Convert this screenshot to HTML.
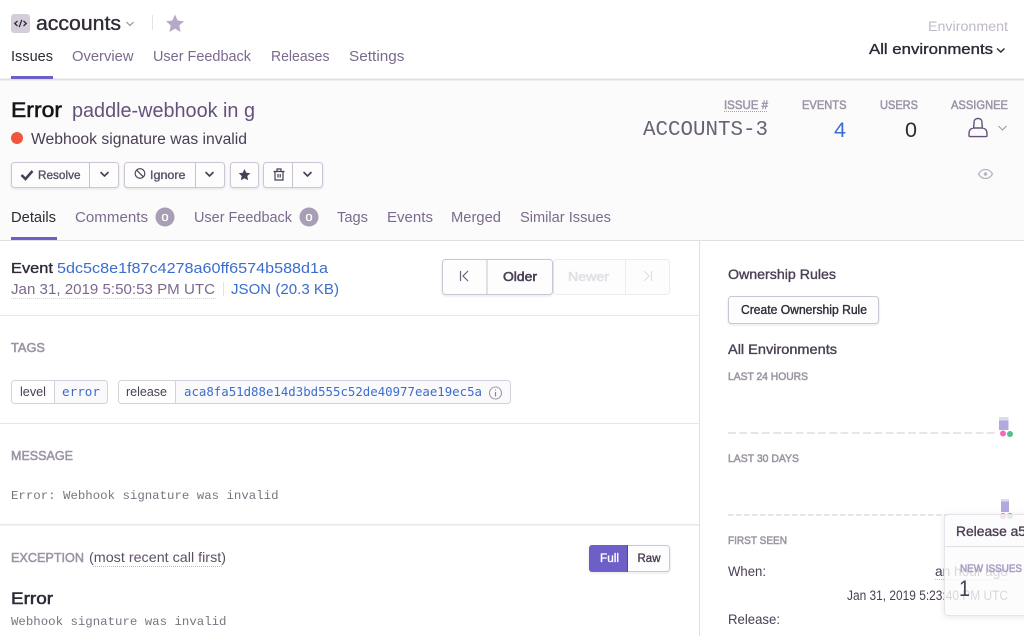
<!DOCTYPE html>
<html><head><meta charset="utf-8"><title>accounts</title>
<style>
html,body{margin:0;padding:0;background:#fff;width:1024px;height:636px;overflow:hidden}
svg{display:block;position:absolute;left:0;top:0;filter:blur(.3px)}
text{font-family:"Liberation Sans",sans-serif;white-space:pre}
.m{stroke-width:.35;paint-order:stroke}
.h{stroke-width:.55;paint-order:stroke}
.mono{font-family:"Liberation Mono",monospace}
.dj{font-family:"DejaVu Sans Mono",monospace}
.lab{font-size:12px;fill:#9d93a6;stroke:#9d93a6;stroke-width:.5}
.nav{font-size:14.5px;fill:#7c6a8e}
.lnk{fill:#3b6ecc;font-size:15px}
.ic{fill:none;stroke:#493e54;stroke-width:1.6;stroke-linecap:round;stroke-linejoin:round}
.btn{fill:#fdfdfe;stroke:#cdc5d5;stroke-width:1}
</style></head><body>
<svg width="1024" height="636" viewBox="0 0 1024 636" xmlns="http://www.w3.org/2000/svg">
<defs>
<filter id="sh" x="-20%" y="-20%" width="140%" height="140%"><feDropShadow dx="0" dy="1" stdDeviation="1" flood-color="#3b3050" flood-opacity=".12"/></filter>
<filter id="sh2" x="-20%" y="-20%" width="140%" height="140%"><feDropShadow dx="0" dy="1" stdDeviation="3" flood-color="#3b3050" flood-opacity=".14"/></filter>
</defs>
<rect width="1024" height="636" fill="#fff"/>
<rect x="0" y="80" width="1024" height="160" fill="#fbfbfc"/>
<rect x="0" y="78.500" width="1024" height="2" fill="#e2dee6"/>
<rect x="11" y="76" width="42" height="3" fill="#6c5fc7"/>

<!-- project header -->
<rect x="11" y="14" width="19" height="19" rx="3" fill="#d3ced9"/>
<path d="M17.500 21 L14.800 23.500 L17.500 26 M23.500 21 L26.200 23.500 L23.500 26 M21.800 19.800 L19.200 27.200" fill="none" stroke="#2f2936" stroke-width="1.300"/>
<text x="36" y="30" font-size="20" fill="#2f2936" stroke="#2f2936" class="m" textLength="85" lengthAdjust="spacingAndGlyphs">accounts</text>
<path d="M126.500 22 L130 25.500 L133.500 22" fill="none" stroke="#8f8599" stroke-width="1"/>
<rect x="152" y="15" width="1" height="15" fill="#e5e2e8"/>
<path d="M175 14.500 L177.700 20.500 L184 21.200 L179.300 25.400 L180.600 32 L175 28.700 L169.400 32 L170.700 25.400 L166 21.200 L172.300 20.500 Z" fill="#b5a9c7"/>

<text x="11" y="61" font-size="14.500" fill="#2f2936" textLength="42" lengthAdjust="spacingAndGlyphs">Issues</text>
<text x="72" y="61" class="nav" textLength="61.500" lengthAdjust="spacingAndGlyphs">Overview</text>
<text x="153" y="61" class="nav" textLength="98" lengthAdjust="spacingAndGlyphs">User Feedback</text>
<text x="271" y="61" class="nav" textLength="58.500" lengthAdjust="spacingAndGlyphs">Releases</text>
<text x="349" y="61" class="nav" textLength="55.500" lengthAdjust="spacingAndGlyphs">Settings</text>

<text x="928" y="31" font-size="14" fill="#c0b8c9" textLength="80" lengthAdjust="spacingAndGlyphs">Environment</text>
<text x="869" y="54" font-size="15" fill="#2f2936" stroke="#2f2936" class="m" textLength="124" lengthAdjust="spacingAndGlyphs">All environments</text>
<path d="M997 48.500 L1000.800 52 L1004.500 48.500" fill="none" stroke="#2f2936" stroke-width="1.400"/>

<!-- issue title -->
<text x="11" y="117" font-size="21" fill="#161319" stroke="#161319" class="h" textLength="51" lengthAdjust="spacingAndGlyphs">Error</text>
<text x="72" y="117" font-size="20" fill="#64527a" textLength="183" lengthAdjust="spacingAndGlyphs">paddle-webhook in g</text>
<circle cx="17" cy="138" r="6" fill="#f0563c"/>
<text x="31" y="144" font-size="15.500" fill="#493e54" textLength="216" lengthAdjust="spacingAndGlyphs">Webhook signature was invalid</text>

<!-- action buttons -->
<g filter="url(#sh)">
<rect class="btn" x="11.500" y="162.500" width="107" height="25" rx="3"/>
<rect class="btn" x="124.500" y="162.500" width="100" height="25" rx="3"/>
<rect class="btn" x="230.500" y="162.500" width="28" height="25" rx="3"/>
<rect class="btn" x="263.500" y="162.500" width="59" height="25" rx="3"/>
</g>
<rect x="89" y="162" width="1" height="26" fill="#c9c0d1"/>
<rect x="195" y="162" width="1" height="26" fill="#c9c0d1"/>
<rect x="292" y="162" width="1" height="26" fill="#c9c0d1"/>
<path d="M21.500 175 L25.500 179 L32.500 171" fill="none" stroke="#493e54" stroke-width="2.600"/>
<text x="38" y="179" font-size="12" fill="#5a4f66" stroke="#5a4f66" class="m" textLength="42.500" lengthAdjust="spacingAndGlyphs">Resolve</text>
<path d="M101 172.500 L104.500 176 L108 172.500" class="ic"/>
<circle cx="140" cy="173.500" r="4.800" fill="none" stroke="#493e54" stroke-width="1.100"/>
<path d="M136.700 170.200 L143.300 176.800" stroke="#493e54" stroke-width="1.100"/>
<text x="150" y="179" font-size="12" fill="#5a4f66" stroke="#5a4f66" class="m" textLength="35.500" lengthAdjust="spacingAndGlyphs">Ignore</text>
<path d="M206 172.500 L209.500 176 L213 172.500" class="ic"/>
<path d="M244.500 169 L246.300 172.800 L250.300 173.300 L247.300 176 L248.100 180.200 L244.500 178.200 L240.900 180.200 L241.700 176 L238.700 173.300 L242.700 172.800 Z" fill="#493e54"/>
<path d="M273.500 171.500 H284.500 M275 171.500 V180 H283 V171.500 M277 171.500 V169 H281 V171.500 M278 174 V177.500 M280.200 174 V177.500" fill="none" stroke="#493e54" stroke-width="1.200"/>
<path d="M304 172.500 L307.500 176 L311 172.500" class="ic"/>

<!-- stats -->
<text x="724" y="109" class="lab" textLength="44" lengthAdjust="spacingAndGlyphs">ISSUE #</text>
<path d="M724 111.500 H768" stroke="#a89eb5" stroke-width="1" stroke-dasharray="1 1"/>
<text x="802" y="109" class="lab" textLength="44.500" lengthAdjust="spacingAndGlyphs">EVENTS</text>
<text x="880" y="109" class="lab" textLength="38" lengthAdjust="spacingAndGlyphs">USERS</text>
<text x="951" y="109" class="lab" textLength="57" lengthAdjust="spacingAndGlyphs">ASSIGNEE</text>
<text x="643" y="135" class="mono" font-size="20.800" fill="#6a6072" textLength="125" lengthAdjust="spacingAndGlyphs">ACCOUNTS-3</text>
<text x="834" y="137" font-size="21" fill="#3b6ecc" textLength="12" lengthAdjust="spacingAndGlyphs">4</text>
<text x="905" y="137" font-size="21" fill="#2f2936" textLength="12" lengthAdjust="spacingAndGlyphs">0</text>
<path d="M973.500 128 C973.500 126.500 974 125.800 974 124 V122 C974 119.800 975.800 118.500 978 118.500 C980.200 118.500 982 119.800 982 122 V124 C982 125.800 982.500 126.500 982.500 128 M969 134 C969 129.500 971 128.500 973.500 128 H982.500 C985 128.500 987 129.500 987 134 V135.500 C987 136.300 986.500 136.600 986 136.600 H970 C969.500 136.600 969 136.300 969 135.500 Z" fill="none" stroke="#64527a" stroke-width="1.400"/>
<path d="M998.500 126 L1002.500 130 L1006.500 126" fill="none" stroke="#9d93a6" stroke-width="1"/>
<path d="M978.500 174 C980.500 170.500 983 169.500 985.500 169.500 C988 169.500 990.500 170.500 992.500 174 C990.500 177.500 988 178.500 985.500 178.500 C983 178.500 980.500 177.500 978.500 174 Z" fill="none" stroke="#b9b3c0" stroke-width="1.300"/>
<circle cx="985.500" cy="174" r="1.800" fill="#b9b3c0"/>

<!-- subtabs -->
<text x="11" y="222" font-size="14.500" fill="#2f2936" textLength="45" lengthAdjust="spacingAndGlyphs">Details</text>
<text x="75" y="222" class="nav" textLength="73" lengthAdjust="spacingAndGlyphs">Comments</text>
<circle cx="165" cy="217" r="9.500" fill="#a89eb5"/>
<text x="161.500" y="221" font-size="10.500" fill="#fff" stroke="#fff" class="m" textLength="7" lengthAdjust="spacingAndGlyphs">0</text>
<text x="194" y="222" class="nav" textLength="98" lengthAdjust="spacingAndGlyphs">User Feedback</text>
<circle cx="309" cy="217" r="9.500" fill="#a89eb5"/>
<text x="305.500" y="221" font-size="10.500" fill="#fff" stroke="#fff" class="m" textLength="7" lengthAdjust="spacingAndGlyphs">0</text>
<text x="337" y="222" class="nav" textLength="31" lengthAdjust="spacingAndGlyphs">Tags</text>
<text x="387" y="222" class="nav" textLength="46" lengthAdjust="spacingAndGlyphs">Events</text>
<text x="451" y="222" class="nav" textLength="50" lengthAdjust="spacingAndGlyphs">Merged</text>
<text x="520" y="222" class="nav" textLength="91" lengthAdjust="spacingAndGlyphs">Similar Issues</text>
<rect x="0" y="240" width="1024" height="1" fill="#e2dee6"/>
<rect x="11" y="237" width="46" height="3" fill="#6c5fc7"/>
<rect x="699" y="240" width="1" height="396" fill="#e2dee6"/>

<!-- event row -->
<text x="11" y="273" font-size="15" fill="#2f2936" stroke="#2f2936" class="m" textLength="42" lengthAdjust="spacingAndGlyphs">Event</text>
<text x="57" y="273" class="lnk" textLength="271" lengthAdjust="spacingAndGlyphs">5dc5c8e1f87c4278a60ff6574b588d1a</text>
<text x="11" y="294" font-size="15" fill="#7c6a8e" textLength="204" lengthAdjust="spacingAndGlyphs">Jan 31, 2019 5:50:53 PM UTC</text>
<path d="M11 298.500 H216" stroke="#d8d3dd" stroke-width="1" stroke-dasharray="1 1"/>
<rect x="223" y="282" width="1" height="14" fill="#e5e2e8"/>
<text x="231" y="294" class="lnk" textLength="108" lengthAdjust="spacingAndGlyphs">JSON (20.3 KB)</text>

<!-- pager -->
<rect x="553.500" y="259.500" width="116" height="35" rx="3" fill="#fdfdfe" stroke="#eeecf0"/>
<rect x="625" y="260" width="1" height="34" fill="#eeecf0"/>
<g filter="url(#sh)"><rect class="btn" x="442.500" y="259.500" width="110" height="35" rx="3"/></g>
<rect x="486.500" y="259" width="1" height="36" fill="#c9c0d1"/>
<path d="M460.500 271 V281 M468 271 L463 276 L468 281" fill="none" stroke="#6e6279" stroke-width="1.200"/>
<text x="503" y="281" font-size="13" fill="#493e54" stroke="#493e54" class="h" textLength="34" lengthAdjust="spacingAndGlyphs">Older</text>
<text x="568" y="281" font-size="13" fill="#e2dee6" stroke="#e2dee6" class="h" textLength="41" lengthAdjust="spacingAndGlyphs">Newer</text>
<path d="M644 271 L649 276 L644 281 M651.500 271 V281" fill="none" stroke="#e2dee6" stroke-width="1.200"/>
<rect x="0" y="315" width="699" height="1" fill="#e8e6eb"/>

<!-- tags -->
<text x="11" y="352" font-size="13" fill="#9d93a6" stroke="#9d93a6" class="h" textLength="34" lengthAdjust="spacingAndGlyphs">TAGS</text>
<rect x="11.500" y="380.500" width="96" height="23" rx="3" fill="#fafafc" stroke="#d5d0da"/>
<path d="M14 381 H54 V403 H14 A3 3 0 0 1 12 401 V383 A3 3 0 0 1 14 381 Z" fill="#fff"/>
<rect x="54" y="381" width="1" height="22" fill="#d5d0da"/>
<text x="20" y="396" font-size="13" fill="#493e54" textLength="26" lengthAdjust="spacingAndGlyphs">level</text>
<text x="62" y="396" class="dj" font-size="12.400" fill="#3b6ecc" textLength="38" lengthAdjust="spacingAndGlyphs">error</text>
<rect x="118.500" y="380.500" width="392" height="23" rx="3" fill="#fafafc" stroke="#d5d0da"/>
<path d="M121 381 H175 V403 H121 A3 3 0 0 1 119 401 V383 A3 3 0 0 1 121 381 Z" fill="#fff"/>
<rect x="175" y="381" width="1" height="22" fill="#d5d0da"/>
<text x="126" y="396" font-size="13" fill="#493e54" textLength="41" lengthAdjust="spacingAndGlyphs">release</text>
<text x="184" y="396" class="dj" font-size="12.400" fill="#3b6ecc" textLength="298" lengthAdjust="spacingAndGlyphs">aca8fa51d88e14d3bd555c52de40977eae19ec5a</text>
<circle cx="495.500" cy="393" r="6" fill="none" stroke="#a19aa8" stroke-width="1.100"/>
<path d="M495.500 392 V396.500 M495.500 389.500 V390.500" stroke="#8f8799" stroke-width="1.200"/>
<rect x="0" y="423" width="699" height="1" fill="#e8e6eb"/>

<!-- message -->
<text x="11" y="460" font-size="13" fill="#9d93a6" stroke="#9d93a6" class="h" textLength="62" lengthAdjust="spacingAndGlyphs">MESSAGE</text>
<text x="11" y="499" class="mono" font-size="12.400" fill="#7a7480" textLength="267.500" lengthAdjust="spacingAndGlyphs">Error: Webhook signature was invalid</text>
<rect x="0" y="524" width="699" height="1.500" fill="#e8e6eb"/>

<!-- exception -->
<text x="11" y="562" font-size="13" fill="#9d93a6" stroke="#9d93a6" class="h" textLength="73" lengthAdjust="spacingAndGlyphs">EXCEPTION</text>
<text x="89" y="562" font-size="14" fill="#5c5066" textLength="137" lengthAdjust="spacingAndGlyphs">(most recent call first)</text>
<path d="M93 566.500 H222" stroke="#bdb6c4" stroke-width="1" stroke-dasharray="1 1"/>
<g filter="url(#sh)"><rect class="btn" x="589.500" y="545.500" width="80" height="26" rx="3"/></g>
<path d="M592 545 H628 V572 H592 A3 3 0 0 1 589 569 V548 A3 3 0 0 1 592 545 Z" fill="#6c5fc7"/>
<rect x="627" y="545" width="1" height="27" fill="#4f42a8"/>
<text x="600" y="562" font-size="11.500" fill="#fff" stroke="#fff" class="m" textLength="19" lengthAdjust="spacingAndGlyphs">Full</text>
<text x="637.500" y="562" font-size="11.500" fill="#493e54" stroke="#493e54" class="m" textLength="23" lengthAdjust="spacingAndGlyphs">Raw</text>
<text x="11" y="604" font-size="17" fill="#2f2936" stroke="#2f2936" class="h" textLength="42" lengthAdjust="spacingAndGlyphs">Error</text>
<text x="11" y="625" class="mono" font-size="12.400" fill="#7a7480" textLength="215.500" lengthAdjust="spacingAndGlyphs">Webhook signature was invalid</text>

<!-- sidebar -->
<text x="728" y="279" font-size="14" fill="#493e54" stroke="#493e54" class="m" textLength="108" lengthAdjust="spacingAndGlyphs">Ownership Rules</text>
<g filter="url(#sh)"><rect class="btn" x="728.500" y="296.500" width="150" height="27" rx="3"/></g>
<text x="741" y="314" font-size="12.500" fill="#2f2936" stroke="#2f2936" class="m" textLength="126" lengthAdjust="spacingAndGlyphs">Create Ownership Rule</text>
<text x="728" y="354" font-size="14" fill="#493e54" stroke="#493e54" class="m" textLength="109" lengthAdjust="spacingAndGlyphs">All Environments</text>
<text x="728" y="380" font-size="11" fill="#9c95a3" stroke="#9c95a3" class="h" textLength="80" lengthAdjust="spacingAndGlyphs">LAST 24 HOURS</text>
<path d="M728 433 H997" stroke="#e0dce5" stroke-width="1.600" stroke-dasharray="8 3.250"/>
<rect x="999" y="417" width="9.500" height="13" fill="#b3a9e2"/>
<rect x="999" y="417" width="9.500" height="3.500" fill="#dedbe9"/>
<circle cx="1003" cy="433.500" r="3" fill="#f868bc"/>
<circle cx="1010" cy="434" r="3" fill="#57be8c"/>
<text x="728" y="462" font-size="11" fill="#9c95a3" stroke="#9c95a3" class="h" textLength="71" lengthAdjust="spacingAndGlyphs">LAST 30 DAYS</text>
<path d="M728 515 H997" stroke="#e0dce5" stroke-width="1.600" stroke-dasharray="5.500 2.500"/>
<rect x="1001" y="499" width="8" height="13" fill="#b3a9e2"/>
<rect x="1001" y="499" width="8" height="2.500" fill="#dedbe9"/>
<circle cx="1003" cy="516" r="3" fill="#f868bc"/>
<circle cx="1010" cy="516" r="3" fill="#57be8c"/>
<text x="728" y="544" font-size="11" fill="#9c95a3" stroke="#9c95a3" class="h" textLength="59" lengthAdjust="spacingAndGlyphs">FIRST SEEN</text>
<text x="728" y="576" font-size="14" fill="#493e54" textLength="38" lengthAdjust="spacingAndGlyphs">When:</text>
<text x="935" y="576" font-size="14" fill="#493e54" textLength="73" lengthAdjust="spacingAndGlyphs">an hour ago</text>
<path d="M935 579.500 H1008" stroke="#c9c3cf" stroke-width="1" stroke-dasharray="1 1"/>
<text x="847" y="600" font-size="13.500" fill="#493e54" textLength="161" lengthAdjust="spacingAndGlyphs">Jan 31, 2019 5:23:40 PM UTC</text>
<text x="728" y="624" font-size="14" fill="#493e54" textLength="52" lengthAdjust="spacingAndGlyphs">Release:</text>

<!-- tooltip -->
<rect x="944.500" y="514.500" width="90" height="101" rx="4" fill="#fff" fill-opacity=".78" stroke="#e6e3ea" filter="url(#sh2)"/>
<rect x="945" y="546" width="79" height="1" fill="#e2dee6"/>
<text x="956" y="536" font-size="14" fill="#493e54" stroke="#493e54" class="m" textLength="70" lengthAdjust="spacingAndGlyphs">Release a5</text>
<text x="960" y="572" font-size="11" fill="#a99cc4" stroke="#a99cc4" class="h" textLength="62" lengthAdjust="spacingAndGlyphs">NEW ISSUES</text>
<text x="959" y="596" font-size="22" fill="#493e54" textLength="11" lengthAdjust="spacingAndGlyphs">1</text>
</svg>
</body></html>
